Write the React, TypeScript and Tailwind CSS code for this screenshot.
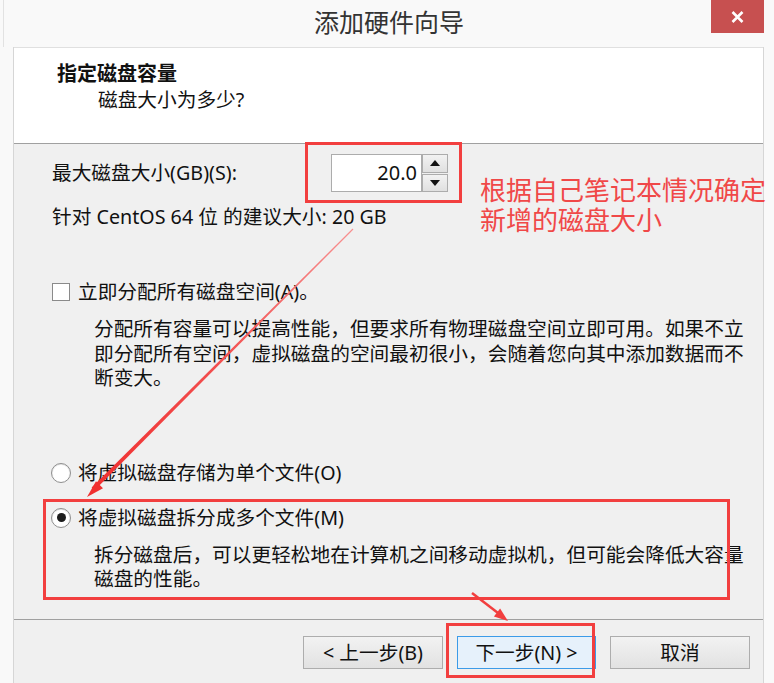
const font = "font-['Noto_Sans','Noto_Sans_CJK_SC',sans-serif]";

const Radio = ({ checked }: { checked?: boolean }) => (
  <span className="w-[20px] h-[20px] rounded-full border border-[#8f8f8f] bg-gradient-to-b from-[#e6e6e6] to-white flex items-center justify-center shrink-0">
    <span className="w-[16px] h-[16px] rounded-full bg-white flex items-center justify-center">
      {checked && <span className="w-[9px] h-[9px] rounded-full bg-[#1c1c1c]" />}
    </span>
  </span>
);

const Btn = ({ label, active }: { label: string; active?: boolean }) => (
  <button
    className={
      active
        ? "w-[139px] h-[33px] border border-[#3c9be8] bg-[#e6f1fb] text-[19.7px] leading-none text-[#111]"
        : "w-[140px] h-[33px] border border-[#adadad] bg-gradient-to-b from-[#f2f2f2] to-[#e2e2e2] text-[19.7px] leading-none text-[#111]"
    }
  >
    {label}
  </button>
);

export default function App() {
  return (
    <div className={`w-[774px] h-[683px] bg-[#f9f9f9] relative overflow-hidden flex flex-col ${font}`}>
      {/* title bar */}
      <div className="h-[47px] grid grid-cols-[1fr_auto_1fr] border-l border-[#e2e2e2] ml-[3px]">
        <div />
        <div className="text-[25px] leading-[34px] pt-[5px] text-[#333]">添加硬件向导</div>
        <div className="flex justify-end">
          <div className="w-[53px] h-[33px] mr-[10px] bg-[#c75050] flex items-center justify-center">
            <svg width="13" height="12" viewBox="0 0 13 12">
              <path d="M1.5 1 L11.5 11 M11.5 1 L1.5 11" stroke="white" strokeWidth="2.6" />
            </svg>
          </div>
        </div>
      </div>

      <div className="ml-[13px] mr-[10px] flex-1 flex flex-col border-l border-r border-[#d6d6d6]">
        {/* header */}
        <div className="h-[97px] bg-white border-t border-[#e0e0e0] border-b border-b-[#a0a0a0] pt-[13px] pl-[43px] text-[#111]">
          <div className="text-[20px] leading-[26px] font-bold">指定磁盘容量</div>
          <div className="text-[19.7px] leading-[26px] pl-[41px]">磁盘大小为多少?</div>
        </div>

        {/* body */}
        <div className="flex-1 bg-[#f0f0f0] pl-[38px] pt-[10px] text-[19.7px] text-[#111]">
          <div className="flex items-center h-[38px]">
            <div className="w-[279px] leading-[26px]">最大磁盘大小(GB)(S):</div>
            <div className="w-[91px] h-[38px] border border-[#acacac] bg-white flex items-center justify-end pr-[4px] text-[20px]">
              20.0
            </div>
            <div className="flex flex-col gap-[1px] h-[38px] w-[26px]">
              <div className="flex-1 border border-[#acacac] bg-gradient-to-b from-[#f2f2f2] to-[#e0e0e0] flex items-center justify-center">
                <svg width="10" height="6" viewBox="0 0 10 6"><path d="M5 0 L10 6 L0 6 Z" fill="#111" /></svg>
              </div>
              <div className="flex-1 border border-[#acacac] bg-gradient-to-b from-[#f2f2f2] to-[#e0e0e0] flex items-center justify-center">
                <svg width="10" height="6" viewBox="0 0 10 6"><path d="M0 0 L10 0 L5 6 Z" fill="#111" /></svg>
              </div>
            </div>
          </div>
          <div className="mt-[12px] leading-[26px]">针对 CentOS 64 位 的建议大小: 20 GB</div>

          <div className="mt-[49px] flex items-center gap-[8px] leading-[26px]">
            <span className="w-[18px] h-[18px] border border-[#8a8a8a] bg-white shrink-0" />
            <span>立即分配所有磁盘空间(A)。</span>
          </div>
          <div className="mt-[12px] pl-[42px] leading-[24.5px] whitespace-nowrap">
            <div>分配所有容量可以提高性能，但要求所有物理磁盘空间立即可用。如果不立</div>
            <div>即分配所有空间，虚拟磁盘的空间最初很小，会随着您向其中添加数据而不</div>
            <div>断变大。</div>
          </div>

          <div className="mt-[69px] flex items-center gap-[7px] leading-[26px] -ml-[1px]">
            <Radio />
            <span>将虚拟磁盘存储为单个文件(O)</span>
          </div>
          <div className="mt-[19px] flex items-center gap-[7px] leading-[26px] -ml-[1px]">
            <Radio checked />
            <span>将虚拟磁盘拆分成多个文件(M)</span>
          </div>
          <div className="mt-[12px] pl-[42px] leading-[24px] whitespace-nowrap">
            <div>拆分磁盘后，可以更轻松地在计算机之间移动虚拟机，但可能会降低大容量</div>
            <div>磁盘的性能。</div>
          </div>
        </div>

        {/* footer */}
        <div className="h-[64px] bg-[#f0f0f0] border-t border-[#a0a0a0] flex justify-end items-start gap-[14px] pt-[16px] pr-[13px]">
          <Btn label="< 上一步(B)" />
          <Btn label="下一步(N) >" active />
          <Btn label="取消" />
        </div>
      </div>

      {/* annotations */}
      <div className="absolute left-[305px] top-[142px] w-[157px] h-[61px] border-[3px] border-[#f23f3f]" />
      <div className="absolute left-[43px] top-[499px] w-[687px] h-[101px] border-[3px] border-[#f23f3f]" />
      <div className="absolute left-[446px] top-[623px] w-[149px] h-[55px] border-[3px] border-[#f23f3f]" />
      <div className="absolute left-[480px] top-[175px] text-[26px] leading-[30px] text-[#f04848] whitespace-nowrap">
        <div>根据自己笔记本情况确定</div>
        <div>新增的磁盘大小</div>
      </div>
      <svg className="absolute inset-0 pointer-events-none" width="774" height="683" viewBox="0 0 774 683">
        <defs>
          <linearGradient id="fade" x1="353" y1="229" x2="93" y2="489" gradientUnits="userSpaceOnUse">
            <stop offset="0" stopColor="#f79090" />
            <stop offset="0.5" stopColor="#f25050" />
            <stop offset="1" stopColor="#f03030" />
          </linearGradient>
        </defs>
        <polygon points="353.4,229.4 352.6,228.6 91.6,487.6 94.4,490.4" fill="url(#fade)" />
        <polygon points="87,497 103,488.2 96,481.2" fill="#f03030" />
        <line x1="472" y1="593" x2="498" y2="613" stroke="#f23f3f" strokeWidth="2.5" />
        <polygon points="508,621 493.9,616.4 500.1,608.5" fill="#f23f3f" />
      </svg>
    </div>
  );
}
